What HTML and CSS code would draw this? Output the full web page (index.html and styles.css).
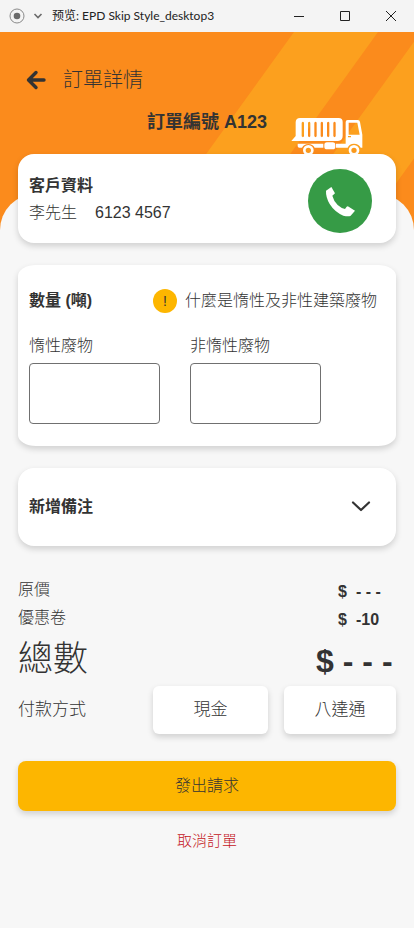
FILE: index.html
```html
<!DOCTYPE html>
<html lang="zh-Hant">
<head>
<meta charset="utf-8">
<meta name="viewport" content="width=device-width, initial-scale=1">
<title>EPD Skip Style_desktop3</title>
<link rel="stylesheet" href="styles.css">
</head>
<body>
<div class="titlebar">
  <svg class="titlebar-icon" width="16" height="16" viewBox="0 0 16 16"><circle cx="8" cy="8" r="7" fill="none" stroke="#8a8a8a"/><circle cx="8" cy="8" r="3.3" fill="#6b6b6b"/></svg>
  <svg class="titlebar-caret" width="10" height="6" viewBox="0 0 10 6"><path d="M1.500 1L5 4.500 8.500 1" fill="none" stroke="#6b6b6b" stroke-width="1.600"/></svg>
  <span class="titlebar-text" lang="zh-Hans">预览: EPD Skip Style_desktop3</span>
  <div class="window-controls">
    <button type="button" aria-label="最小化"><svg width="10" height="10" viewBox="0 0 10 10"><path d="M0 5.5h10" stroke="#222"/></svg></button>
    <button type="button" aria-label="最大化"><svg width="10" height="10" viewBox="0 0 10 10"><path d="M.5.5h9v9h-9z" fill="none" stroke="#222"/></svg></button>
    <button type="button" aria-label="關閉"><svg width="10" height="10" viewBox="0 0 10 10"><path d="M0 0l10 10M10 0L0 10" stroke="#222"/></svg></button>
  </div>
</div>

<header class="hero">
  <svg class="hero-stripes" viewBox="0 0 414 200" preserveAspectRatio="xMaxYMin slice"><path d="M294 0h84L234 200h-84zM421 0h84L361 200h-84z" fill="#fca01e"/></svg>
  <div class="nav">
    <button type="button" class="back" aria-label="返回"><svg width="20" height="20" viewBox="0 0 20 20"><path d="M10 2.500L2.500 10l7.500 7.500M3 10H18" fill="none" stroke="#333" stroke-width="3.400" stroke-linecap="round" stroke-linejoin="round"/></svg></button>
    <h1>訂單詳情</h1>
  </div>
  <div class="order">
    <h2>訂單編號 A123</h2>
    <svg class="truck" width="72" height="37" viewBox="33 51 216 111">
      <path fill="#fff" fill-rule="evenodd" d="M34 123L47 108V66Q48 54 60 54H176Q188 54 188 66V108Q188 122 174 123ZM65 68v41q4 5 7 0V68q-3-5-7 0ZM84 68v41q4 5 7 0V68q-3-5-7 0ZM103 68v41q4 5 7 0V68q-3-5-7 0ZM122 68v41q4 5 7 0V68q-3-5-7 0ZM141 68v41q4 5 7 0V68q-3-5-7 0ZM160 68v41q4 5 7 0V68q-3-5-7 0Z"/>
      <path fill="#fff" fill-rule="evenodd" d="M197 66Q197 60 203 60H233Q239 60 240 66L247 104V143H242Q236 131 222 131Q208 131 203 143H168V131H197ZM206 68V104H239L232 68ZM204 108v4h9v-4Z"/>
      <path fill="#fff" d="M53 131H130V143H104Q98 132 85 132Q72 132 66 143H58Q53 143 53 138Z"/>
      <rect x="133" y="127" width="33" height="21" rx="8" fill="#fff"/>
      <g fill="#fb9a1d" stroke="#fff" stroke-width="8"><circle cx="85" cy="151" r="12"/><circle cx="222" cy="151" r="12"/></g>
    </svg>
  </div>
</header>

<main class="sheet">
  <section class="card customer">
    <div class="customer-info">
      <h3>客戶資料</h3>
      <p><span>李先生</span><span>6123 4567</span></p>
    </div>
    <button type="button" class="call" aria-label="致電"><svg width="64" height="64" viewBox="84 206 192 192"><path fill="#fff" d="M138 271L153 261Q156 260 157 265L165 279L157 286Q161 302 173 314Q184 324 195 326L200 319Q203 317 206 319L225 331L212 346Q206 350 190 346Q164 335 149 311Q137 290 138 271Z"/></svg></button>
  </section>

  <section class="card amount">
    <div class="amount-head">
      <h3>數量 (噸)</h3>
      <a href="#help" class="help"><span class="badge">!</span>什麼是惰性及非性建築廢物</a>
    </div>
    <div class="fields">
      <div class="field"><label for="inert">惰性廢物</label><input id="inert" type="text" inputmode="decimal"></div>
      <div class="field"><label for="non-inert">非惰性廢物</label><input id="non-inert" type="text" inputmode="decimal"></div>
    </div>
  </section>

  <button type="button" class="card note">新增備注<svg width="20" height="12" viewBox="0 0 20 12"><path d="M2 1.500l8 7.500 8-7.500" fill="none" stroke="#333" stroke-width="2.200" stroke-linecap="round" stroke-linejoin="round"/></svg></button>

  <dl class="summary">
    <div class="line"><dt>原價</dt><dd><span>$</span><span>- - -</span></dd></div>
    <div class="line"><dt>優惠卷</dt><dd><span>$</span><span>-10</span></dd></div>
    <div class="line total"><dt>總數</dt><dd><span>$</span><span>- - -</span></dd></div>
  </dl>

  <div class="payment">
    <span class="payment-label">付款方式</span>
    <button type="button">現金</button>
    <button type="button">八達通</button>
  </div>

  <button type="button" class="submit">發出請求</button>
  <a href="#cancel" class="cancel">取消訂單</a>
</main>
</body>
</html>
```
FILE: styles.css
```css
* { box-sizing: border-box; }

body {
  margin: 0;
  min-height: 100vh;
  background: #f7f7f7;
  color: #333;
  font-family: "Liberation Sans", "Noto Sans CJK TC", sans-serif;
  font-size: 16px;
  font-weight: 300;
  line-height: 24px;
}

h1, h2, h3, p, dl, dd { margin: 0; }

button, input {
  font: inherit;
  color: inherit;
}

button {
  padding: 0;
  border: 0;
  background: none;
}

a {
  color: inherit;
  text-decoration: none;
}

svg { display: block; }

.titlebar {
  display: flex;
  align-items: center;
  height: 32px;
  padding-left: 9px;
  background: #f4f4f4;
  color: #222;
  font-family: Lato, "Noto Sans CJK SC", sans-serif;
  font-size: 12px;
  font-weight: 400;
}

.titlebar-caret { margin: 0 9px 0 8px; }

.window-controls {
  display: flex;
  margin-left: auto;
}

.window-controls button {
  display: grid;
  place-items: center;
  width: 46px;
  height: 32px;
}

.hero {
  position: relative;
  padding-bottom: 80px;
  background: #fb8b1c;
}

.hero-stripes {
  position: absolute;
  inset: 0;
  width: 100%;
  height: 200px;
}

.nav, .order { position: relative; }

.nav {
  display: flex;
  align-items: center;
  gap: 17px;
  padding: 34px 26px 0;
}

h1 {
  font-size: 20px;
  font-weight: 300;
  line-height: 28px;
}

.order {
  display: grid;
  grid-template-columns: 1fr auto 1fr;
  align-items: end;
  height: 60px;
}

.order h2 {
  grid-column: 2;
  align-self: start;
  padding-top: 16px;
  font-size: 18px;
  line-height: 24px;
}

.truck { margin-left: 24px; }

.sheet {
  position: relative;
  display: flex;
  flex-direction: column;
  margin-top: -40px;
  padding: 0 18px 40px;
  border-radius: 36px 36px 0 0;
  background: #f7f7f7;
}

.card {
  margin-bottom: 22px;
  border-radius: 16px;
  background: #fff;
  box-shadow: 0 3px 6px rgba(0, 0, 0, 0.16);
}

h3 {
  font-size: 16px;
  line-height: 27px;
}

.customer {
  display: flex;
  justify-content: space-between;
  margin-top: -40px;
  padding: 15px 24px 10px 11px;
}

.customer-info { padding-top: 3px; }

.customer p {
  display: flex;
  gap: 18px;
  line-height: 27px;
}

.call {
  width: 64px;
  height: 64px;
  border-radius: 50%;
  background: #369b46;
}

.amount {
  padding: 22px 19px 22px 11px;
  border-radius: 18px / 11px;
}

.amount-head, .help {
  display: flex;
  align-items: center;
}

.amount-head { justify-content: space-between; }

.help { gap: 8px; }

.badge {
  display: grid;
  place-items: center;
  width: 24px;
  height: 24px;
  border-radius: 50%;
  background: #fdb600;
  font-size: 14px;
}

.fields {
  display: flex;
  gap: 30px;
  margin-top: 20px;
}

.field {
  flex: 0 1 131px;
  min-width: 0;
}

.field label { display: block; }

.field input {
  display: block;
  width: 100%;
  height: 61px;
  margin-top: 5px;
  padding: 0 12px;
  border: 1px solid #707070;
  border-radius: 4px;
  background: #fff;
}

.note {
  display: flex;
  align-items: center;
  justify-content: space-between;
  padding: 27px 25px 27px 11px;
  font-weight: 700;
}

.summary { padding-top: 8px; }

.line {
  display: flex;
  align-items: center;
  justify-content: space-between;
  line-height: 28px;
}

.line dd {
  display: flex;
  gap: 9px;
  width: 58px;
  padding-top: 4px;
  font-weight: 700;
  line-height: 24px;
}

.total {
  font-size: 35px;
  line-height: 54px;
}

.total dd {
  width: 80px;
  font-size: 32px;
  line-height: 50px;
}

.payment {
  display: grid;
  grid-template-columns: 119px 115fr 112fr;
  align-items: center;
  column-gap: 16px;
  font-size: 17px;
}

.payment button {
  height: 48px;
  border-radius: 6px;
  background: #fff;
  box-shadow: 0 3px 6px rgba(0, 0, 0, 0.16);
}

.submit {
  height: 50px;
  margin-top: 27px;
  border-radius: 8px;
  background: #fdb600;
  box-shadow: 0 3px 6px rgba(0, 0, 0, 0.16);
}

.cancel {
  align-self: center;
  margin-top: 18px;
  color: #c4161c;
  font-size: 15px;
}
```
